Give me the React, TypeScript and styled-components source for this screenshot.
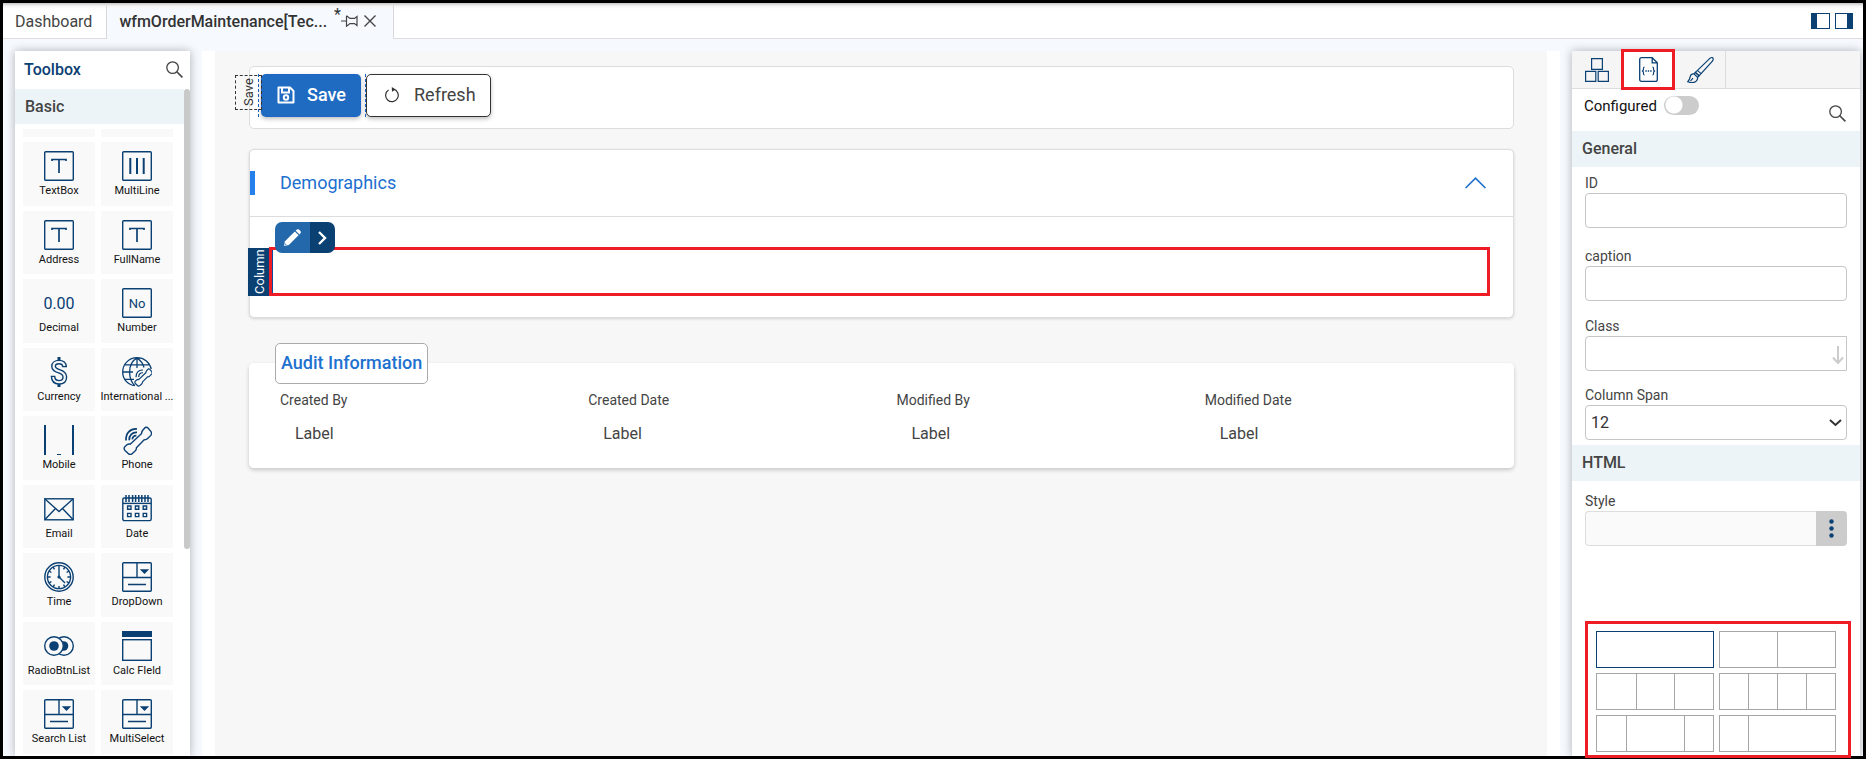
import React from "react";
import styled, { createGlobalStyle, css } from "styled-components";

const navy = "#0b4073";
const blue = "#2070cf";
const red = "#ee1c24";

const Global = createGlobalStyle`
  *, *::before, *::after { box-sizing: border-box; }
  body { margin: 0; background: #fff; font-family: Roboto, "Liberation Sans", sans-serif; color: #444; }
  button, input, textarea, select { font-family: inherit; }
  svg { display: block; flex: none; }
`;

const App_ = styled.div`
  height: 100vh;
  margin-right: 1px;
  border: 3px solid #000;
  background: #f6faff;
  display: flex;
  flex-direction: column;
`;

const TabBar = styled.nav`
  display: flex;
  flex: none;
  height: 36px;
  background: linear-gradient(#c4c4c4, #f4f4f4 3px, #ffffff00 6px), #fff;
  box-shadow: inset 0 -1px 0 #ddd;
`;

const Tab = styled.div<{ $active?: boolean }>`
  display: flex;
  align-items: center;
  padding: 0 14px 0 12px;
  border-right: 1px solid #d8d8d8;
  font-size: 16px;
  color: #444;
  ${(p) =>
    p.$active &&
    css`
      padding: 0 11px 0 12px;
      font-weight: 500;
      color: #333;
      background: linear-gradient(#c4c4c4, #f4f4f4 3px, #ffffff00 6px), #f6faff;
    `}
`;

const TabLink = styled.a`
  color: inherit;
  text-decoration: none;
  white-space: nowrap;
`;

const Dirty = styled.sup`
  align-self: flex-start;
  margin-left: 7px;
  font-size: 16px;
  line-height: 24px;
  font-weight: 400;
`;

const IconButton = styled.button`
  display: flex;
  align-items: center;
  justify-content: center;
  padding: 0;
  border: 0;
  background: none;
  color: #444;
`;

const PaneToggles = styled.div`
  display: flex;
  gap: 5px;
  align-items: center;
  margin-left: auto;
  padding-right: 10px;
`;

const Workspace = styled.div`
  flex: 1;
  min-height: 0;
  display: flex;
  gap: 12px;
  padding: 12px 3px 0 12px;
`;

const Toolbox = styled.aside`
  flex: none;
  width: 175px;
  background: #fff;
  box-shadow: 0 0 9px #0000004d;
  clip-path: inset(-12px -12px 0 -12px);
  overflow: hidden;
`;

const ToolboxHead = styled.header`
  display: flex;
  justify-content: space-between;
  align-items: center;
  height: 38px;
  padding: 0 7px 2px 9px;
  font-size: 16px;
  font-weight: 500;
  color: ${navy};
`;

const ToolboxBody = styled.div`
  display: flex;
`;

const Scrollbar = styled.div`
  width: 6px;
  height: 460px;
  border-radius: 3px;
  background: #c9c9c9;
`;

const Band = styled.h2<{ $strong?: boolean }>`
  flex: none;
  margin: 0;
  height: ${(p) => (p.$strong ? 36 : 35)}px;
  padding: 0 10px;
  background: #ecf4f7;
  font-size: 16px;
  line-height: 35px;
  font-weight: 500;
  color: #444;
`;

const Tools = styled.div`
  flex: 1;
  min-width: 0;
`;

const ToolStub = styled.div`
  display: grid;
  grid-template-columns: 72px 72px;
  gap: 6px;
  padding: 5px 0 5px 8px;
  &::before, &::after { content: ""; height: 8px; background: #f9f9f9; }
`;

const ToolGrid = styled.div`
  display: grid;
  grid-template-columns: 72px 72px;
  grid-template-rows: repeat(9, 1fr);
  gap: 5px 6px;
  height: 612px;
  padding-left: 8px;
`;

const Tool = styled.button`
  display: flex;
  flex-direction: column;
  align-items: center;
  min-width: 0;
  padding: 9px 0 0;
  border: 0;
  background: #f9f9f9;
  color: ${navy};
`;

const ToolName = styled.span`
  white-space: nowrap;
  font-size: 11px;
  line-height: 20px;
  color: #111;
`;

const Stage = styled.main`
  flex: 1;
  min-width: 0;
  padding: 0 13px;
  background: #fff;
`;

const Canvas = styled.div`
  height: 100%;
  padding: 15px 33px 0 34px;
  background: #f7f7f7;
`;

const Card = styled.section`
  border: 1px solid #ddd;
  border-radius: 5px;
  background: #fff;
  margin-bottom: 20px;
`;

const Toolbar = styled(Card)`
  display: flex;
  padding: 7px 8px 11px;
`;

const Selected = styled.div`
  position: relative;
  width: 108px;
  padding: 0 4px 0 2px;
  border: 1px dashed #1c63c8;
  border-width: 0 1px;
`;

const SelectedTag = styled.span`
  position: absolute;
  left: -24px;
  top: 1px;
  width: 27px;
  height: 35px;
  border: 1px dashed #333;
  writing-mode: vertical-rl;
  transform: rotate(180deg);
  text-align: center;
  font-size: 13px;
  line-height: 25px;
  color: #333;
`;

const Button = styled.button<{ $primary?: boolean }>`
  display: flex;
  align-items: center;
  height: 43px;
  border-radius: 5px;
  font-size: 18px;
  box-shadow: 0 2px 4px #00000040;
  ${(p) =>
    p.$primary
      ? css`
          width: 100px;
          gap: 12px;
          padding: 0 0 2px 15px;
          border: 1px dashed #1c63c8;
          background: #206bc2;
          color: #fff;
          font-weight: 500;
        `
      : css`
          width: 125px;
          gap: 15px;
          padding: 0 0 2px 18px;
          border: 1px solid #333;
          background: #fff;
          color: #444;
        `}
`;

const Section = styled(Card)`
  margin-bottom: 25px;
  box-shadow: 0 1px 3px #00000026;
`;

const SectionHead = styled.header`
  display: flex;
  align-items: center;
  justify-content: space-between;
  height: 67px;
  padding-right: 27px;
  border-bottom: 1px solid #ddd;
`;

const SectionTitle = styled.h1`
  margin: 0;
  padding-left: 25px;
  border-left: 5px solid #2680eb;
  font-size: 18px;
  line-height: 24px;
  font-weight: 400;
  color: ${blue};
`;

const SectionBody = styled.div`
  padding: 30px 23px 21px 19px;
`;

const DropColumn = styled.div`
  position: relative;
  z-index: 0;
  height: 49px;
  border: 3px solid ${red};
  box-shadow: inset 1px 0 0 #0b4fa0;
`;

const ColumnTag = styled.span`
  position: absolute;
  left: -24px;
  top: -2px;
  width: 21px;
  height: 48px;
  writing-mode: vertical-rl;
  transform: rotate(180deg);
  text-align: center;
  font-size: 13px;
  line-height: 23px;
  background: ${navy};
  color: #fff;
`;

const Actions = styled.div`
  position: absolute;
  z-index: -1;
  left: 3px;
  top: -28px;
  display: flex;
  height: 31px;
  border-radius: 7px;
  overflow: hidden;
`;

const Action = styled.button<{ $dark?: boolean }>`
  display: flex;
  align-items: center;
  justify-content: center;
  width: ${(p) => (p.$dark ? 25 : 35)}px;
  padding: 0;
  border: 0;
  color: #fff;
  background: ${(p) => (p.$dark ? navy : "#2368ab")};
`;

const Audit = styled.fieldset`
  min-width: 0;
  margin: 0;
  padding: 0 0 23px 25px;
  border: 1px solid #fff;
  border-radius: 5px;
  background: #fff;
  box-shadow: 0 2px 4px #00000033;
`;

const AuditLegend = styled.legend`
  height: 41px;
  padding: 0 5px;
  border: 1px solid #aaa;
  border-radius: 5px;
  background: #fff;
  font-size: 18px;
  line-height: 37px;
  font-weight: 500;
  color: ${blue};
`;

const AuditGrid = styled.dl`
  display: grid;
  grid-template-columns: repeat(4, 1fr);
  margin: 0;
  padding: 6px 0 0 5px;
`;

const AuditTerm = styled.dt`
  font-size: 14px;
  line-height: 20px;
`;

const AuditValue = styled.dd`
  margin: 14px 0 0 15px;
  font-size: 16px;
  line-height: 20px;
`;

const Inspector = styled.aside`
  flex: none;
  display: flex;
  flex-direction: column;
  width: 288px;
  background: #fff;
  box-shadow: 0 0 9px #0000004d;
  clip-path: inset(-12px -3px -2px -12px);
`;

const InspectorTabs = styled.div`
  display: flex;
  flex: none;
  height: 38px;
  background: #f5f5f5;
  border-bottom: 1px solid #ddd;
`;

const InspectorTab = styled.button<{ $current?: boolean }>`
  display: flex;
  align-items: center;
  justify-content: center;
  width: 51px;
  padding: 0;
  border: 0;
  border-right: 1px solid #ddd;
  background: none;
  color: ${navy};
  &:first-child { width: 49px; border-right: 0; }
  ${(p) =>
    p.$current &&
    css`
      width: 54px;
      margin: -2px 0;
      border: 3px solid ${red};
      background: #fff;
    `}
`;

const Configured = styled.div`
  display: flex;
  flex: none;
  justify-content: space-between;
  height: 42px;
  padding: 6px 14px 0 12px;
`;

const SwitchLabel = styled.label`
  display: flex;
  gap: 7px;
  align-items: center;
  height: 21px;
  font-size: 15px;
  color: #111;
`;

const Switch = styled.input`
  appearance: none;
  width: 35px;
  height: 19px;
  margin: 0;
  border-radius: 10px;
  background: radial-gradient(circle at 10px 9px, #fff 8px, #ffffff00 9px), #ccc;
`;

const SearchSlot = styled.div`
  padding-top: 10px;
`;

const Fields = styled.div<{ $top: number }>`
  padding: ${(p) => p.$top}px 13px 5px;
`;

const Field = styled.div<{ $gap?: number }>`
  margin-bottom: ${(p) => p.$gap ?? 0}px;
`;

const Label = styled.label`
  display: block;
  font-size: 14px;
  line-height: 20px;
  color: #444;
`;

const control = css`
  display: block;
  width: 100%;
  height: 35px;
  margin: 0;
  border: 1px solid #c6c6c6;
  border-radius: 4px;
  background: #fff;
  font-size: 16px;
  color: #333;
`;

const Input = styled.input`${control}`;

const ControlWrap = styled.div`
  position: relative;
  svg { position: absolute; right: 3px; top: 10px; pointer-events: none; }
`;

const Area = styled.textarea`
  ${control}
  border-radius: 4px 0 0 4px;
  resize: none;
`;

const Select = styled.select`
  ${control}
  appearance: none;
  padding-left: 5px;
`;

const InputGroup = styled.div`
  display: flex;
`;

const GroupInput = styled(Input)`
  flex: 1;
  min-width: 0;
  border-color: #ddd;
  border-right: 0;
  border-radius: 4px 0 0 4px;
  background: #fafafa;
`;

const MoreButton = styled(IconButton)`
  width: 31px;
  border-radius: 0 4px 4px 0;
  background: #ccc;
  color: ${navy};
`;

const Layouts = styled.div`
  flex: none;
  display: grid;
  grid-template-columns: 1fr 1fr;
  grid-auto-rows: 37px;
  gap: 5px;
  margin: auto 9px -2px 13px;
  padding: 7px 12px 3px 8px;
  border: 3px solid ${red};
  background: #fff;
`;

const LayoutOption = styled.button<{ $columns: string; $on?: boolean }>`
  display: grid;
  grid-template-columns: ${(p) => p.$columns};
  padding: 0;
  border: 1px solid ${(p) => (p.$on ? navy : "#a6a6a6")};
  background: #fff;
`;

const LayoutCell = styled.span`
  height: 100%;
  & + & { border-left: 1px solid #a6a6a6; }
`;

const Svg = ({ s = 30, w, children }: { s?: number; w?: number; children: React.ReactNode }) => (
  <svg width={s} height={s} viewBox="0 0 30 30" fill="none" stroke="currentColor" strokeWidth={w ?? 1.4} aria-hidden="true">
    {children}
  </svg>
);

const Frame = () => <rect x="0.7" y="0.7" width="28.6" height="28.6" rx="1" />;

const TextIcon = () => (
  <Svg><Frame /><path d="M8 10V8.5H22V10M15 8.5V22" strokeWidth="1.7" /></Svg>
);
const LinesIcon = () => (
  <Svg><Frame /><path d="M8.3 7V23M15 7V23M21.7 7V23" strokeWidth="2" /></Svg>
);
const ListIcon = () => (
  <Svg>
    <Frame />
    <path d="M0 15.5H30M15 1V15M6 22.5H24" />
    <path d="M19.5 8H25.5L22.5 11Z" fill="currentColor" />
  </Svg>
);
const Glyph = styled.text`
  font-family: Roboto, sans-serif;
  fill: currentColor;
  stroke: none;
  text-anchor: middle;
`;
const DecimalIcon = () => (
  <svg width="34" height="30" viewBox="0 0 34 30" color={navy}><Glyph x="17" y="21" fontSize="16">0.00</Glyph></svg>
);
const NumberIcon = () => (
  <Svg><Frame /><Glyph x="15" y="20" fontSize="13">No</Glyph></Svg>
);
const CurrencyIcon = () => (
  <Svg>
    <path d="M22.3 9.6C22 5.6 19.2 3.4 15 3.4C10.8 3.4 7.8 5.6 7.8 9.2C7.8 13 11 14.8 14.6 15.9C17.8 16.9 19 17.8 19 20C19 22.3 17.5 23.6 15 23.6C12.2 23.6 10.9 22.3 10.7 19.4H7.4C7.6 24.4 10.6 27 15 27C19.6 27 22.6 24.4 22.6 20C22.6 15.8 19.5 13.9 15.6 12.7C12.5 11.7 11.4 11 11.4 9.3C11.4 7.7 12.8 6.8 15 6.8C17.4 6.8 18.6 7.7 18.8 9.6Z" />
    <path d="M15 0V3.5M15 27V30" strokeWidth="3" />
  </Svg>
);
const handset =
  "M22.5 3.2C23.5 2 25 2 26 3L29 6.6C29.8 8 29.6 9.4 28.8 10.4L25.6 13.6C24.6 14.6 23.4 15 22.2 14.8L14.4 22.8C14.6 24.2 13.6 25.6 12.6 26.6L10 28.8C8.8 29.8 7.2 29.6 6.2 28.6L3 25.4C1.8 24 2 22.6 3 21.6L5 19.8C6 19 7 18.8 8.2 19.2L19.6 8.4C19.4 7.2 20 6.2 21 5Z";
const PhoneIcon = () => (
  <Svg>
    <path d={handset} />
    <path d="M4 15.5C3.6 8.2 8 3.6 15 4M7.2 15.2C7 10.4 10.2 7 15 7.4M10.4 14.4C10.3 12 12 10.4 14.4 10.6" strokeWidth="1.7" />
  </Svg>
);
const GlobeIcon = () => (
  <Svg w={1.3}>
    <path d="M13 28.6C6 28 .7 22.4 .7 15C.7 7 7 .7 15 .7C22.2 .7 28 5.6 29.2 12M2.6 7.8H27.4M.7 15H11M2.6 22.4H12M15 .7V11M12.8 28.6C9 25 7.6 20.4 7.6 15C7.6 8.8 10.4 3.6 15 .9C19 3.6 21 6.8 22 10.5" />
    <g transform="translate(11.5 10.5) scale(.63)" strokeWidth="1.9">
      <path d={handset} />
      <path d="M4 15.5C3.6 8.2 8 3.6 15 4M8.2 15.2C8 10.4 11.2 8 15 8.4" />
    </g>
  </Svg>
);
const MobileIcon = () => (
  <Svg><path d="M1 0V30M29 0V30" strokeWidth="2" /><path d="M13 29.5H17" strokeWidth="1" /></Svg>
);
const MailIcon = () => (
  <Svg>
    <rect x="0.8" y="4.8" width="28.4" height="21" />
    <path d="M1 5L15 17.5L29 5M1 25.5L11.5 14.6M29 25.5L18.5 14.6" />
  </Svg>
);
const DateIcon = () => (
  <Svg>
    <rect x="0.8" y="4" width="28.4" height="22.6" rx="1.5" />
    <path d="M1 9.4H29" />
    <path d="M4 1V8M7 1V8M10.6 1V8M13.6 1V8M16.8 1V8M19.8 1V8M23 1V8M26 1V8" strokeWidth="1.5" />
    <path d="M5.6 12H9V15.2H5.6ZM13.4 12H16.8V15.2H13.4ZM21.2 12H24.6V15.2H21.2ZM5.6 19.4H9V22.6H5.6ZM13.4 19.4H16.8V22.6H13.4ZM21.2 19.4H24.6V22.6H21.2Z" />
  </Svg>
);
const TimeIcon = () => (
  <Svg>
    <circle cx="15" cy="15" r="14.2" />
    <circle cx="15" cy="15" r="11.6" />
    <circle cx="15" cy="15" r="1.6" fill="currentColor" stroke="none" />
    <path d="M15 3.5V15L21 21M15 24V27M3.6 15H6.6M23.4 15H26.4M9.2 5.2L10.5 7.4M20.8 5.2L19.5 7.4M5.2 9.2L7.4 10.5M24.8 9.2L22.6 10.5M5.2 20.8L7.4 19.5M24.8 20.8L22.6 19.5M9.2 24.8L10.5 22.6M20.8 24.8L19.5 22.6" />
  </Svg>
);
const RadioIcon = () => (
  <Svg>
    <circle cx="20" cy="15" r="9.3" />
    <circle cx="19.5" cy="15" r="4.8" fill="currentColor" stroke="none" />
    <circle cx="10" cy="15" r="9.3" fill="#f9f9f9" />
    <circle cx="10" cy="15" r="4.8" fill="currentColor" stroke="none" />
  </Svg>
);
const CalcIcon = () => (
  <Svg>
    <rect x="0" y="0" width="30" height="6" fill="currentColor" stroke="none" />
    <rect x="0.7" y="8.7" width="28.6" height="20.6" />
  </Svg>
);
const SearchIcon = () => (
  <svg width="17" height="17" viewBox="0 0 17 17" fill="none" stroke="#444" strokeWidth="1.3" aria-hidden="true">
    <circle cx="6.6" cy="6.6" r="5.8" /><path d="M10.8 10.8L16.4 16.4" strokeWidth="1.6" />
  </svg>
);

const tools: [string, () => React.ReactElement][] = [
  ["TextBox", TextIcon], ["MultiLine", LinesIcon],
  ["Address", TextIcon], ["FullName", TextIcon],
  ["Decimal", DecimalIcon], ["Number", NumberIcon],
  ["Currency", CurrencyIcon], ["International ...", GlobeIcon],
  ["Mobile", MobileIcon], ["Phone", PhoneIcon],
  ["Email", MailIcon], ["Date", DateIcon],
  ["Time", TimeIcon], ["DropDown", ListIcon],
  ["RadioBtnList", RadioIcon], ["Calc FIeld", CalcIcon],
  ["Search List", ListIcon], ["MultiSelect", ListIcon],
];

const audit = ["Created By", "Created Date", "Modified By", "Modified Date"];

const layouts = ["1fr", "1fr 1fr", "1fr 1fr 1fr", "1fr 1fr 1fr 1fr", "1fr 2fr 1fr", "1fr 3fr"];

export default function App() {
  return (
    <App_>
      <Global />
      <TabBar>
        <Tab><TabLink href="#dashboard">Dashboard</TabLink></Tab>
        <Tab $active>
          <TabLink href="#order">wfmOrderMaintenance[Tec...</TabLink>
          <Dirty>*</Dirty>
          <IconButton aria-label="Pin tab">
            <svg width="17" height="12" viewBox="0 0 17 12" fill="none" stroke="currentColor" strokeWidth="1.2">
              <path d="M0 6H5.5M5.5 .8V11.2L9 8.6H13.5L16 10.5V1.5L13.5 3.4H9L5.5 .8" />
            </svg>
          </IconButton>
          <IconButton aria-label="Close tab">
            <svg width="24" height="12" viewBox="-6 0 24 12" fill="none" stroke="currentColor" strokeWidth="1.4">
              <path d="M.5 .5L11.5 11.5M11.5 .5L.5 11.5" />
            </svg>
          </IconButton>
        </Tab>
        <PaneToggles>
          <IconButton aria-label="Toggle left pane">
            <svg width="19" height="16" viewBox="0 0 19 16" stroke={navy} fill="#fff">
              <rect x=".5" y=".5" width="18" height="15" /><rect x="0" y="0" width="6" height="16" fill={navy} stroke="none" />
            </svg>
          </IconButton>
          <IconButton aria-label="Toggle right pane">
            <svg width="18" height="16" viewBox="0 0 18 16" stroke={navy} fill="#fff">
              <rect x=".5" y=".5" width="17" height="15" /><rect x="12" y="0" width="6" height="16" fill={navy} stroke="none" />
            </svg>
          </IconButton>
        </PaneToggles>
      </TabBar>

      <Workspace>
        <Toolbox>
          <ToolboxHead>
            Toolbox
            <IconButton aria-label="Search toolbox"><SearchIcon /></IconButton>
          </ToolboxHead>
          <ToolboxBody>
            <Tools>
              <Band>Basic</Band>
              <ToolStub />
              <ToolGrid>
                {tools.map(([name, Icon]) => (
                  <Tool key={name}><Icon /><ToolName>{name}</ToolName></Tool>
                ))}
              </ToolGrid>
            </Tools>
            <Scrollbar />
          </ToolboxBody>
        </Toolbox>

        <Stage>
          <Canvas>
            <Toolbar>
              <Selected>
                <Button $primary>
                  <svg width="18" height="18" viewBox="0 0 18 18" fill="none" stroke="#fff" strokeWidth="2">
                    <path d="M2.5 1.5H13L16.5 5V16.5H1.5V1.5Z" strokeLinejoin="round" />
                    <path d="M5 2V6.5H12V2" /><circle cx="9" cy="11.5" r="2.2" />
                  </svg>
                  Save
                </Button>
                <SelectedTag>Save</SelectedTag>
              </Selected>
              <Button>
                <svg width="14" height="16" viewBox="0 0 14 16" fill="none" stroke="#333" strokeWidth="1.2">
                  <path d="M8.4 2.2A6.3 6.3 0 1 1 3.6 3" /><path d="M6.8 0L10.6 2.4L7 4.8Z" fill="#333" stroke="none" />
                </svg>
                Refresh
              </Button>
            </Toolbar>

            <Section>
              <SectionHead>
                <SectionTitle>Demographics</SectionTitle>
                <IconButton aria-label="Collapse section">
                  <svg width="21" height="12" viewBox="0 0 21 12" fill="none" stroke={blue} strokeWidth="1.7">
                    <path d="M.6 11L10.5 1.2L20.4 11" />
                  </svg>
                </IconButton>
              </SectionHead>
              <SectionBody>
                <DropColumn>
                  <Actions>
                    <Action aria-label="Edit column">
                      <svg width="17" height="17" viewBox="0 0 17 17" fill="#fff">
                        <path d="M0 17L1 12.2L10.8 2.4L14.6 6.2L4.8 16Z" /><path d="M11.6 1.6L13 .4Q14 -.2 15 .6L16.4 2Q17.2 3 16.6 4L15.4 5.4Z" />
                        <path d="M2.6 15.6L1.4 14.4L1 16Z" fill="#2368ab" />
                      </svg>
                    </Action>
                    <Action $dark aria-label="Next">
                      <svg width="9" height="14" viewBox="0 0 9 14" fill="none" stroke="#fff" strokeWidth="2.4"><path d="M1 1L7 7L1 13" /></svg>
                    </Action>
                  </Actions>
                  <ColumnTag>Column</ColumnTag>
                </DropColumn>
              </SectionBody>
            </Section>

            <Audit>
              <AuditLegend>Audit Information</AuditLegend>
              <AuditGrid>
                {audit.map((name) => (
                  <div key={name}>
                    <AuditTerm>{name}</AuditTerm>
                    <AuditValue>Label</AuditValue>
                  </div>
                ))}
              </AuditGrid>
            </Audit>
          </Canvas>
        </Stage>

        <Inspector>
          <InspectorTabs>
            <InspectorTab aria-label="Structure">
              <svg width="24" height="24" viewBox="0 0 24 24" fill="none" stroke="currentColor" strokeWidth="1.2">
                <path d="M6.6.6H17.4V11.4H6.6ZM.6 13.4H10.8V23.4H.6ZM13.2 13.4H23.4V23.4H13.2Z" />
              </svg>
            </InspectorTab>
            <InspectorTab $current aria-label="Properties">
              <svg width="19" height="25" viewBox="0 0 19 25" fill="none" stroke="currentColor" strokeWidth="1.3">
                <path d="M2.6.7H13.2L18.3 5.8V22.4Q18.3 24.3 16.4 24.3H2.6Q.7 24.3 .7 22.4V2.6Q.7 .7 2.6 .7ZM13.2 .7V5.8H18.3" />
                <path d="M5.6 10Q4.4 10 4.4 11.4V13L3.4 14L4.4 15V16.6Q4.4 18 5.6 18M13.4 10Q14.6 10 14.6 11.4V13L15.6 14L14.6 15V16.6Q14.6 18 13.4 18" strokeWidth="1.1" />
                <path d="M6.4 14H12.8" strokeDasharray="1.4 1" />
              </svg>
            </InspectorTab>
            <InspectorTab aria-label="Appearance">
              <svg width="27" height="26" viewBox="0 0 27 26" fill="none" stroke="currentColor" strokeWidth="1.2">
                <path d="M8.4 15.4L22.6 1.6Q25.2 -.4 26 1.2Q26.6 2.2 25.4 4.2L12 18.8Z" />
                <path d="M8.4 15.4L12 18.8L10.6 20.4L7 17ZM10.4 13.4L14 16.6M7 17Q4 16.6 3.2 19.6Q2.8 22.6 .6 24.8Q5.6 26.6 8.8 24.6Q11 22.8 10.6 20.4M3.6 23.8L6 21.2" />
              </svg>
            </InspectorTab>
          </InspectorTabs>
          <Configured>
            <SwitchLabel>Configured <Switch type="checkbox" role="switch" /></SwitchLabel>
            <SearchSlot><IconButton aria-label="Search properties"><SearchIcon /></IconButton></SearchSlot>
          </Configured>
          <Band $strong>General</Band>
          <Fields $top={6}>
            <Field $gap={18}><Label htmlFor="f-id">ID</Label><Input id="f-id" /></Field>
            <Field $gap={15}><Label htmlFor="f-caption">caption</Label><Input id="f-caption" /></Field>
            <Field $gap={14}>
              <Label htmlFor="f-class">Class</Label>
              <ControlWrap>
                <Area id="f-class" />
                <svg width="12" height="19" viewBox="0 0 12 19" fill="none" stroke="#ccc" strokeWidth="2"><path d="M6 0V17M1 11.5L6 17L11 11.5" /></svg>
              </ControlWrap>
            </Field>
            <Field>
              <Label htmlFor="f-span">Column Span</Label>
              <ControlWrap>
                <Select id="f-span" defaultValue="12"><option>12</option></Select>
                <svg width="17" height="15" viewBox="0 0 17 15" fill="none" stroke="#333" strokeWidth="2"><path d="M3 5L8.5 10L14 5" /></svg>
              </ControlWrap>
            </Field>
          </Fields>
          <Band $strong>HTML</Band>
          <Fields $top={10}>
            <Field>
              <Label htmlFor="f-style">Style</Label>
              <InputGroup>
                <GroupInput id="f-style" />
                <MoreButton aria-label="More style options">
                  <svg width="5" height="19" viewBox="0 0 5 19" fill="currentColor"><circle cx="2.5" cy="2.5" r="2.2" /><circle cx="2.5" cy="9.5" r="2.2" /><circle cx="2.5" cy="16.5" r="2.2" /></svg>
                </MoreButton>
              </InputGroup>
            </Field>
          </Fields>
          <Layouts>
            {layouts.map((columns, i) => (
              <LayoutOption key={columns} $columns={columns} $on={i === 0} aria-label={`Layout ${i + 1}`}>
                {columns.split(" ").map((_, n) => <LayoutCell key={n} />)}
              </LayoutOption>
            ))}
          </Layouts>
        </Inspector>
      </Workspace>
    </App_>
  );
}
